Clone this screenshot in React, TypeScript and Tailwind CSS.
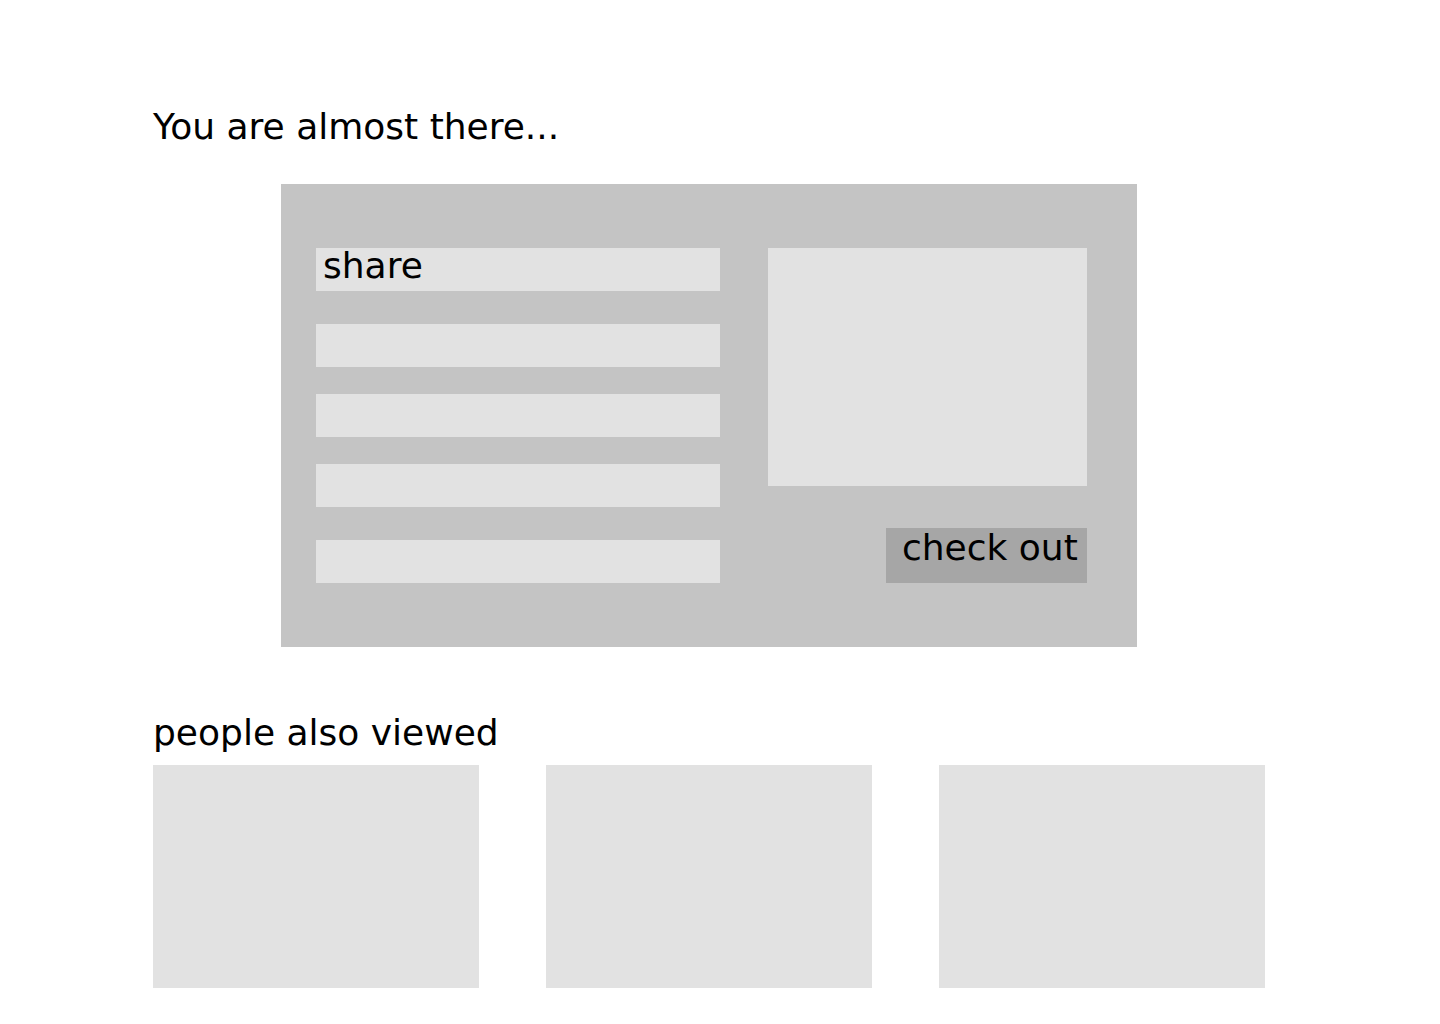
import React from 'react';

const bars = [
  { label: 'share', mt: 'mt-0' },
  { label: '', mt: 'mt-[33px]' },
  { label: '', mt: 'mt-[27px]' },
  { label: '', mt: 'mt-[27px]' },
  { label: '', mt: 'mt-[33px]' },
];

export default function App() {
  return (
    <div className="w-[1440px] h-[1024px] bg-white text-black pl-[153px] pt-[100px] font-['DejaVu_Sans',sans-serif]">
      <h1 className="text-[36px] leading-[54px] font-normal h-[54px]">You are almost there...</h1>

      {/* cart panel */}
      <div className="ml-[128px] mt-[30px] w-[856px] h-[463px] bg-[#c4c4c4] pl-[35px] pt-[64px] flex">
        <div className="flex flex-col w-[404px]">
          {bars.map((bar, i) => (
            <div key={i} className={`${bar.mt} h-[43px] bg-[#e2e2e2] pl-[7px]`}>
              {bar.label && <span className="block text-[36px] leading-[35px]">{bar.label}</span>}
            </div>
          ))}
        </div>
        <div className="ml-[48px] flex flex-col items-end w-[319px]">
          <div className="w-[319px] h-[238px] bg-[#e2e2e2]" />
          <button className="mt-[42px] w-[201px] h-[55px] bg-[#a6a6a6] pl-[16px] text-left text-[36px] leading-[40px] self-end flex items-start whitespace-nowrap">
            check out
          </button>
        </div>
      </div>

      {/* recommendations */}
      <h2 className="mt-[62px] text-[36px] leading-[48px] h-[48px] font-normal">people also viewed</h2>
      <div className="mt-[8px] flex gap-[67px]">
        <div className="w-[326px] h-[223px] bg-[#e2e2e2]" />
        <div className="w-[326px] h-[223px] bg-[#e2e2e2]" />
        <div className="w-[326px] h-[223px] bg-[#e2e2e2]" />
      </div>
    </div>
  );
}
